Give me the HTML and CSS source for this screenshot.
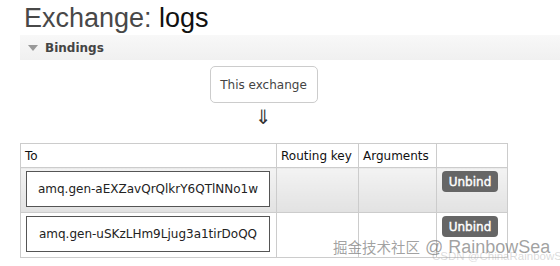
FILE: index.html
```html
<!DOCTYPE html>
<html lang="en">
<head>
  <meta charset="UTF-8">
  <title>Exchange: logs</title>
  <link rel="stylesheet" href="styles.css">
</head>
<body>
  <h1 class="title">Exchange: <b>logs</b></h1>

  <div class="section">
    <div class="section-head"><span class="tri"></span>Bindings</div>

    <div class="source">
      <div class="source-box">This exchange</div>
      <div class="arrow">&#8659;</div>
    </div>

    <table class="bindings">
      <colgroup>
        <col class="col-to">
        <col class="col-key">
        <col class="col-args">
        <col class="col-btn">
      </colgroup>
      <thead>
        <tr>
          <th>To</th>
          <th>Routing key</th>
          <th>Arguments</th>
          <th></th>
        </tr>
      </thead>
      <tbody>
        <tr class="alt">
          <td><span class="queue">amq.gen-aEXZavQrQlkrY6QTlNNo1w</span></td>
          <td></td>
          <td></td>
          <td><button class="unbind">Unbind</button></td>
        </tr>
        <tr>
          <td><span class="queue">amq.gen-uSKzLHm9Ljug3a1tirDoQQ</span></td>
          <td></td>
          <td></td>
          <td><button class="unbind">Unbind</button></td>
        </tr>
      </tbody>
    </table>
  </div>

  <div class="watermark-sub">CSDN @ChinaRainbowSea</div>
  <div class="watermark"><span class="wm-cjk">掘金技术社区</span> @ RainbowSea</div>
</body>
</html>
```

FILE: styles.css
```css
body {
  margin: 0;
  font-family: "DejaVu Sans", Verdana, sans-serif;
  font-size: 12px;
  color: #444;
  background: #fff;
  position: relative;
  height: 266px;
  overflow: hidden;
}

.title {
  margin: 0;
  padding: 3px 0 0 24px;
  font-family: "Liberation Sans", Arial, sans-serif;
  font-size: 27px;
  font-weight: normal;
  line-height: 30px;
  color: #484848;
}

.title b {
  font-weight: normal;
  color: #111;
}

.section {
  margin: 2px 0 0 20px;
}

.section-head {
  height: 25px;
  display: flex;
  align-items: center;
  padding-left: 8px;
  background: linear-gradient(#f8f8f8, #f0f0f0);
  font-weight: bold;
  font-size: 12px;
  color: #444;
}

.tri {
  width: 0;
  height: 0;
  border-left: 5px solid transparent;
  border-right: 5px solid transparent;
  border-top: 6px solid #999;
  margin-right: 7px;
}

.source {
  width: 487px;
  display: flex;
  flex-direction: column;
  align-items: center;
  padding-top: 6px;
}

.source-box {
  width: 106px;
  height: 35px;
  border: 1px solid #ccc;
  border-radius: 5px;
  display: flex;
  align-items: center;
  justify-content: center;
  font-size: 12px;
  color: #444;
}

.arrow {
  font-size: 20px;
  line-height: 22px;
  height: 22px;
  color: #333;
  margin-top: 3px;
}

.bindings {
  border-collapse: collapse;
  table-layout: fixed;
  margin-top: 15px;
  width: 487px;
}

.col-to { width: 256px; }
.col-key { width: 82px; }
.col-args { width: 78px; }
.col-btn { width: 71px; }

.bindings th,
.bindings td {
  border: 1px solid #ccc;
  text-align: left;
  padding: 0;
}

.bindings th {
  height: 23px;
  font-weight: normal;
  color: #111;
  padding-left: 4px;
}

.bindings td {
  height: 38px;
  vertical-align: top;
  padding: 3px 5px;
}

.bindings tr.alt td {
  background: linear-gradient(#f3f3f3, #e2e2e2);
}

.queue {
  display: flex;
  align-items: center;
  justify-content: center;
  width: 242px;
  height: 34px;
  border: 1px solid #555;
  background: #fff;
  color: #222;
  font-size: 12px;
}

.unbind {
  margin-top: 0;
  background: #666;
  color: #fff;
  border: none;
  border-radius: 4px;
  font-family: "DejaVu Sans", Verdana, sans-serif;
  font-size: 12px;
  -webkit-text-stroke: 0.4px #fff;
  width: 56px;
  height: 21px;
  padding: 0;
}

.watermark {
  position: absolute;
  left: 333px;
  top: 236px;
  white-space: nowrap;
  font-family: "Liberation Sans", sans-serif;
  font-size: 18px;
  line-height: 22px;
  color: rgba(100, 100, 100, 0.6);
}

.wm-cjk {
  font-family: "Noto Sans CJK SC", sans-serif;
  font-size: 14.5px;
}

.watermark-sub {
  position: absolute;
  left: 432px;
  top: 250px;
  white-space: nowrap;
  font-family: "Liberation Sans", sans-serif;
  font-size: 11.5px;
  color: rgba(150, 150, 150, 0.35);
}
```
